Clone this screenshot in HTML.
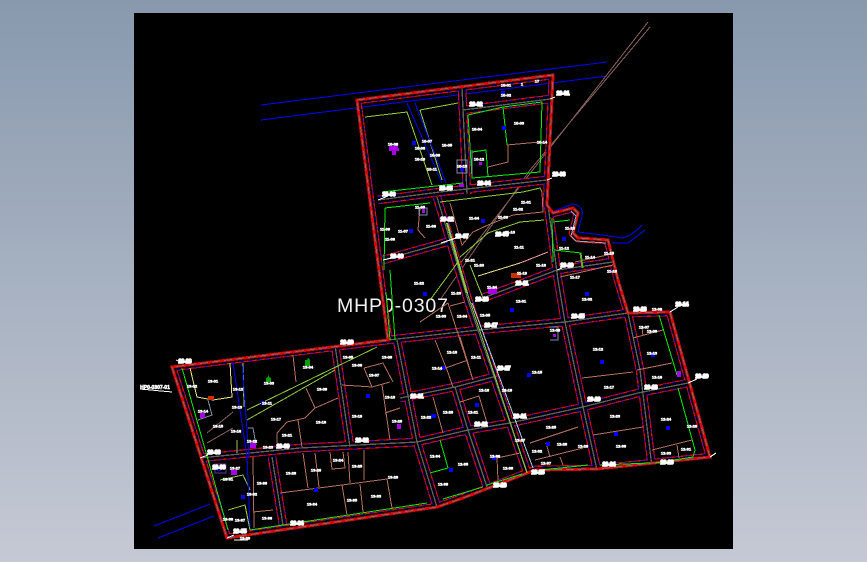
<!DOCTYPE html>
<html lang="en">
<head>
<meta charset="utf-8">
<title>MHP0-0307</title>
<style>
html,body{margin:0;padding:0;width:867px;height:562px;overflow:hidden;background:linear-gradient(#8899ae,#c5c9d4)}
#c{position:absolute;left:134px;top:13px;width:599px;height:536px;background:#000}
svg{position:absolute;left:0;top:0;shape-rendering:crispEdges}
.r path,use{fill:none}
text{font-family:"Liberation Sans",sans-serif;fill:#fff;text-anchor:middle;dominant-baseline:central}
.s text{font-size:4px;font-weight:bold;stroke:#fff;stroke-width:.55}
.b text{font-size:5px;font-weight:bold;stroke:#fff;stroke-width:1.500}
.l{fill:none;stroke-width:1}
.d rect{width:4px;height:4px}
</style>
</head>
<body>
<div id="c"></div>
<svg width="867" height="562" viewBox="0 0 867 562">
<defs>
<clipPath id="cp"><polygon points="357,100 553,75 547,205 553,213 573,208 578,213 573,233 578,238 608,240 618,280 628,313 670,312 710,457 597,469 535,470 463,498 437,507 227,538 172,367 388,340"/></clipPath>
<path id="net" d="M357 100L553 75L547 205L553 213L573 208L578 213L573 233L578 238L608 240L618 280L628 313L670 312L710 457L597 469L535 470L463 498L437 507L227 538L172 367L388 340Z
M378 200L440 192L547 180
M462 88L467 194
M463 110L550 99
M437 197L468 300L478 330L510 423L528 475
M548 205L558 280L565 322L583 407L597 470
M383 260L447 242
M483 298L557 270L613 262
M388 340L478 330L565 322L628 313
M628 313L640 370L652 467
M417 442L468 430L510 423L583 407L638 393L688 383
M400 398L455 387L497 376
M455 387L468 430L487 487
M397 340L417 442L437 507
M200 458L300 448L417 442
M335 345L350 447
M272 457L283 525"/>
</defs>

<!-- blue lines outside -->
<g class="l" stroke="#0000ff">
<path d="M261 105L607 62M261 120L607 76"/>
<path d="M552 212L573 204Q584 206 582 216L578 232L610 236L622 238Q632 236 642 225M612 243L628 243L645 230"/>
<path d="M154 526L210 504M158 538L214 516"/>
</g>
<!-- mauve diagonals -->
<g class="l" stroke="#86605c">
<path d="M648 22L507 203L455 270M650 27L530 170L440 300"/>
<path d="M233 412L207 433M233 428L207 443"/>
</g>

<text x="392.500" y="306" font-size="19.500" textLength="111" lengthAdjust="spacing" style="fill:#f2f2f2">MHP0-0307</text>

<!-- road network -->
<g clip-path="url(#cp)" fill="none" stroke-linejoin="round">
<use href="#net" stroke="#f00000" stroke-width="8.600"/>
<use href="#net" stroke="#0000ff" stroke-width="7.400" stroke-dasharray="5 4"/>
<use href="#net" stroke="#000" stroke-width="6.200"/>
<use href="#net" stroke="#606060" stroke-width="1.300"/>
</g>
<polygon points="357,100 553,75 547,205 553,213 573,208 578,213 573,233 578,238 608,240 618,280 628,313 670,312 710,457 597,469 535,470 463,498 437,507 227,538 172,367 388,340" fill="none" stroke="#e00000" stroke-width="3"/>
<polygon points="357,100 553,75 547,205 553,213 573,208 578,213 573,233 578,238 608,240 618,280 628,313 670,312 710,457 597,469 535,470 463,498 437,507 227,538 172,367 388,340" fill="none" stroke="#707070" stroke-width="1" stroke-dasharray="8 4"/>
<path d="M573 208L578 213L573 233L578 238L608 240" fill="none" stroke="#9ab" stroke-width="1" transform="translate(-2 3)"/>

<!-- bright green -->
<g class="l" stroke="#00ee00">
<path d="M382 192L463 183M468 115L503 107L542 102L540 172L472 178L468 115M472 152L486 150L488 177M503 107L507 145"/>
<path d="M385 208L384 270M385 208L430 203M390 270L395 340"/>
<path d="M182 368L228 530M250 530L427 503"/>
<path d="M659 315L677 375M678 388L695 450L693 457L655 463M600 465L650 463M532 471L588 465M440 440L448 468M430 473L448 468M443 499L483 487M487 485L522 474"/>
<path d="M552 218L553 262M553 222L570 220M554 250L581 253L583 268M386 292L390 340"/>
</g>
<!-- lime -->
<g class="l" stroke="#8ecb3c">
<path d="M365 117L407 112L432 185M420 110L458 103M420 110L442 180"/>
<path d="M440 202L523 192L540 188L542 192"/>
<path d="M460 257L488 233L520 222L544 220"/>
<path d="M463 280L527 473"/>
<path d="M377 347L247 410M335 370L247 420M430 300L458 262"/>
<path d="M243 363L244 407M237 440L237 453M220 480L243 475L250 490M228 510L245 505L250 530"/>
<path d="M470 265L483 298"/>
</g>
<path d="M447 223L467 293" fill="none" stroke="#8ecb3c" stroke-width="2"/>
<!-- yellow -->
<path class="l" stroke="#eee080" d="M190 368L197 397L213 400L232 397L230 363M478 276L520 263"/>
<path class="l" stroke="#f0a0a0" d="M520 263L548 252"/>
<!-- light blue -->
<path class="l" stroke="#9fd0e8" d="M472 303L533 468"/>
<!-- vertical blues -->
<g class="l" stroke="#0000ff">
<path d="M233 363L247 457L250 527M242 363L249 457"/>
<path d="M407 103L442 183M415 103L446 183"/>
</g>
<!-- brown parcels -->
<g class="l" stroke="#b5705a">
<path d="M507 145L540 142M508 145L508 162L488 167"/>
<path d="M450 203L462 245L473 232L488 225L513 215L543 212L542 192"/>
<path d="M420 208L418 230L425 238"/>
<path d="M448 303L472 377M435 340L447 370L453 387M440 370L468 360M460 337L473 380M450 306L465 302M420 322L448 303"/>
<path d="M460 402L479 396L487 423M433 397L443 433"/>
<path d="M530 443L578 427M535 460L583 448M497 458L520 453M497 458L498 480M546 443L550 457M560 457L563 465"/>
<path d="M582 378L633 372M637 370L672 363M633 338L663 330M642 327L643 336"/>
<path d="M593 435L643 427M652 450L692 440M677 445L679 458"/>
<path d="M293 355L296 382M306 388L315 408M277 443L277 433L287 422L305 418L315 408L338 398M298 420L302 447"/>
<path d="M342 385L372 387L390 382M364 368L383 363L393 382M364 368L372 387M382 385L390 440M385 413L400 408"/>
<path d="M280 493L342 485L387 479L392 508M303 453L308 488M315 453L319 487M330 452L332 469L345 468L343 452M348 452L350 483M364 450L364 480M342 485L347 515M360 484L363 512"/>
<path d="M253 512L273 510M253 457L254 528"/>
<path d="M560 277L613 265M575 262L612 254M580 253L582 268"/>
</g>
<!-- grey-blue/purple boxes -->
<g class="l" stroke="#7d8fa8">
<path d="M457 160L467 160L467 173L457 173ZM472 150L472 176M208 400L212 415L198 420M248 428L253 428L256 445"/>
<path d="M419 208L427 208L427 215L419 215ZM549 327L558 327L558 340L550 340"/>
</g>
<rect x="215" y="464" width="11" height="9" fill="none" stroke="#5a3a8a"/>

<!-- leader lines -->
<path class="l" stroke="#fff" d="M555 97L550 99M552 178L547 180M378 200L388 196M383 260L392 258M441 243L456 238M557 270L562 268M688 383L697 379M670 312L678 307M710 457L716 453M140 389L172 392M176 360L180 362M200 458L208 455M227 538L234 535M234 540L248 540"/>

<!-- purple markers -->
<g fill="#a800e8">
<path d="M389 146h6v-2h3v4h1v3h-3v4h-4v-4h-3z"/>
<rect x="488" y="288" width="9" height="6"/>
<rect x="459" y="184" width="5" height="3"/>
<rect x="479" y="162" width="3" height="3"/>
<rect x="422" y="209" width="3" height="4"/>
<rect x="200" y="413" width="5" height="5"/>
<rect x="250" y="443" width="6" height="5"/>
<rect x="231" y="470" width="6" height="5"/>
<rect x="397" y="424" width="4" height="5"/>
<rect x="677" y="371" width="4" height="6"/>
<rect x="553" y="334" width="3" height="3"/>
</g>
<rect x="511" y="273" width="10" height="5" fill="#c83000"/>
<rect x="208" y="396" width="6" height="4" fill="#c83000"/>

<!-- blue dots -->
<g class="d" fill="#0000ff">
<rect x="501" y="91"/><rect x="412" y="141"/><rect x="502" y="126"/><rect x="460" y="167"/><rect x="481" y="219"/><rect x="409" y="229"/><rect x="562" y="237"/><rect x="423" y="292"/><rect x="585" y="292"/><rect x="510" y="308"/><rect x="651" y="353"/><rect x="600" y="360"/><rect x="527" y="373"/><rect x="441" y="366"/><rect x="475" y="403"/><rect x="432" y="414"/><rect x="666" y="426"/><rect x="614" y="432"/><rect x="546" y="442"/><rect x="492" y="456"/><rect x="449" y="468"/><rect x="261" y="401"/><rect x="366" y="394"/><rect x="431" y="414"/><rect x="314" y="488"/><rect x="217" y="467"/><rect x="241" y="495"/>
</g>
<!-- green trees -->
<path d="M305 366h5v-6l-2-2-1 2h-2zM266 382h5v-4l-2-1v-3l-1 3-2 1z" fill="#00a000"/>

<!-- small labels -->
<g class="s">
<text x="506" y="85">10-01</text><text x="522" y="84">1</text><text x="537" y="81">17</text><text x="506" y="95">10-02</text><text x="519" y="123">10-03</text><text x="477" y="129">10-04</text><text x="447" y="145">10-05</text><text x="420" y="148">10-06</text><text x="427" y="141">10-07</text><text x="393" y="144">10-08</text><text x="435" y="155">10-09</text><text x="420" y="159">10-10</text><text x="432" y="169">10-11</text><text x="479" y="159">10-12</text><text x="462" y="166">10-13</text><text x="542" y="142">10-14</text><text x="526" y="202">11-01</text><text x="518" y="209">11-02</text><text x="503" y="217">11-03</text><text x="474" y="218">11-04</text><text x="420" y="207">11-05</text><text x="431" y="226">11-06</text><text x="403" y="231">11-07</text><text x="390" y="239">11-08</text><text x="385" y="229">11-09</text><text x="510" y="232">11-10</text><text x="519" y="247">11-11</text><text x="564" y="248">11-12</text><text x="570" y="228">11-13</text><text x="590" y="257">11-14</text><text x="609" y="253">11-15</text><text x="612" y="271">11-16</text><text x="575" y="277">11-17</text><text x="541" y="265">11-18</text><text x="522" y="273">11-19</text><text x="479" y="265">11-20</text><text x="470" y="260">11-21</text><text x="419" y="283">11-22</text><text x="456" y="293">11-23</text><text x="492" y="287">11-24</text>
<text x="521" y="301">12-01</text><text x="587" y="299">12-02</text><text x="441" y="316">12-03</text><text x="462" y="316">12-04</text><text x="485" y="315">12-05</text><text x="657" y="309">12-06</text><text x="644" y="327">12-07</text><text x="652" y="331">12-08</text><text x="555" y="330">12-09</text><text x="452" y="352">12-10</text><text x="476" y="357">12-11</text><text x="598" y="349">12-12</text><text x="652" y="353">12-13</text><text x="437" y="368">12-14</text><text x="537" y="372">12-15</text><text x="657" y="377">12-16</text><text x="609" y="387">12-17</text><text x="484" y="390">12-18</text><text x="507" y="390">12-19</text><text x="448" y="412">12-20</text><text x="473" y="412">12-21</text><text x="426" y="417">12-22</text><text x="615" y="416">12-23</text><text x="666" y="419">12-24</text><text x="551" y="427">12-25</text><text x="692" y="426">12-26</text><text x="520" y="440">12-27</text><text x="562" y="444">12-28</text><text x="583" y="446">12-29</text><text x="621" y="446">12-30</text><text x="686" y="449">12-31</text><text x="537" y="451">12-32</text><text x="666" y="453">12-33</text><text x="435" y="456">12-34</text><text x="463" y="464">12-35</text><text x="495" y="456">12-36</text><text x="546" y="463">12-37</text><text x="508" y="468">12-38</text><text x="443" y="484">12-39</text>
<text x="213" y="381">13-01</text><text x="192" y="386">13-02</text><text x="269" y="383">13-03</text><text x="308" y="367">13-04</text><text x="348" y="357">13-05</text><text x="357" y="365">13-06</text><text x="374" y="375">13-07</text><text x="387" y="357">13-08</text><text x="322" y="389">13-09</text><text x="390" y="397">13-10</text><text x="267" y="403">13-11</text><text x="238" y="389">13-12</text><text x="237" y="407">13-13</text><text x="203" y="411">13-14</text><text x="218" y="426">13-15</text><text x="236" y="431">13-16</text><text x="276" y="419">13-17</text><text x="321" y="422">13-18</text><text x="357" y="416">13-19</text><text x="397" y="421">13-20</text><text x="287" y="435">13-21</text><text x="252" y="441">13-22</text><text x="268" y="447">13-23</text><text x="338" y="460">13-24</text><text x="357" y="466">13-25</text><text x="316" y="470">13-26</text><text x="235" y="468">13-27</text><text x="291" y="473">13-28</text><text x="393" y="477">13-29</text><text x="262" y="483">13-30</text><text x="228" y="479">13-31</text><text x="252" y="494">13-32</text><text x="376" y="496">13-33</text><text x="312" y="504">13-34</text><text x="352" y="500">13-35</text><text x="267" y="518">13-36</text><text x="240" y="520">13-37</text><text x="228" y="519">13-38</text><text x="245" y="538">13-39</text><text x="155" y="388" style="font-size:5px">HP0-0307-01</text>
</g>
<!-- big station labels -->
<g class="b">
<text x="563" y="94">20-01</text><text x="476" y="105">20-02</text><text x="559" y="175">20-03</text><text x="484" y="184">20-04</text><text x="446" y="189">20-05</text><text x="389" y="195">20-06</text><text x="462" y="237">20-07</text><text x="502" y="235">20-08</text><text x="397" y="257">20-09</text><text x="567" y="266">20-10</text><text x="522" y="284">20-11</text><text x="447" y="220">20-12</text><text x="640" y="310">20-13</text><text x="682" y="305">20-14</text><text x="578" y="317">20-15</text><text x="482" y="300">20-16</text><text x="491" y="326">20-17</text><text x="651" y="388">20-18</text><text x="702" y="377">20-19</text><text x="594" y="400">20-20</text><text x="520" y="417">20-21</text><text x="481" y="425">20-22</text><text x="667" y="463">20-23</text><text x="609" y="465">20-24</text><text x="538" y="473">20-25</text><text x="500" y="486">20-26</text><text x="504" y="369">20-27</text><text x="185" y="362">20-28</text><text x="347" y="343">20-29</text><text x="283" y="447">20-30</text><text x="417" y="397">20-31</text><text x="362" y="441">20-32</text><text x="214" y="453">20-33</text><text x="297" y="524">20-34</text><text x="240" y="532">20-35</text><text x="219" y="468">20-36</text>
</g>
</svg>
</body>
</html>
